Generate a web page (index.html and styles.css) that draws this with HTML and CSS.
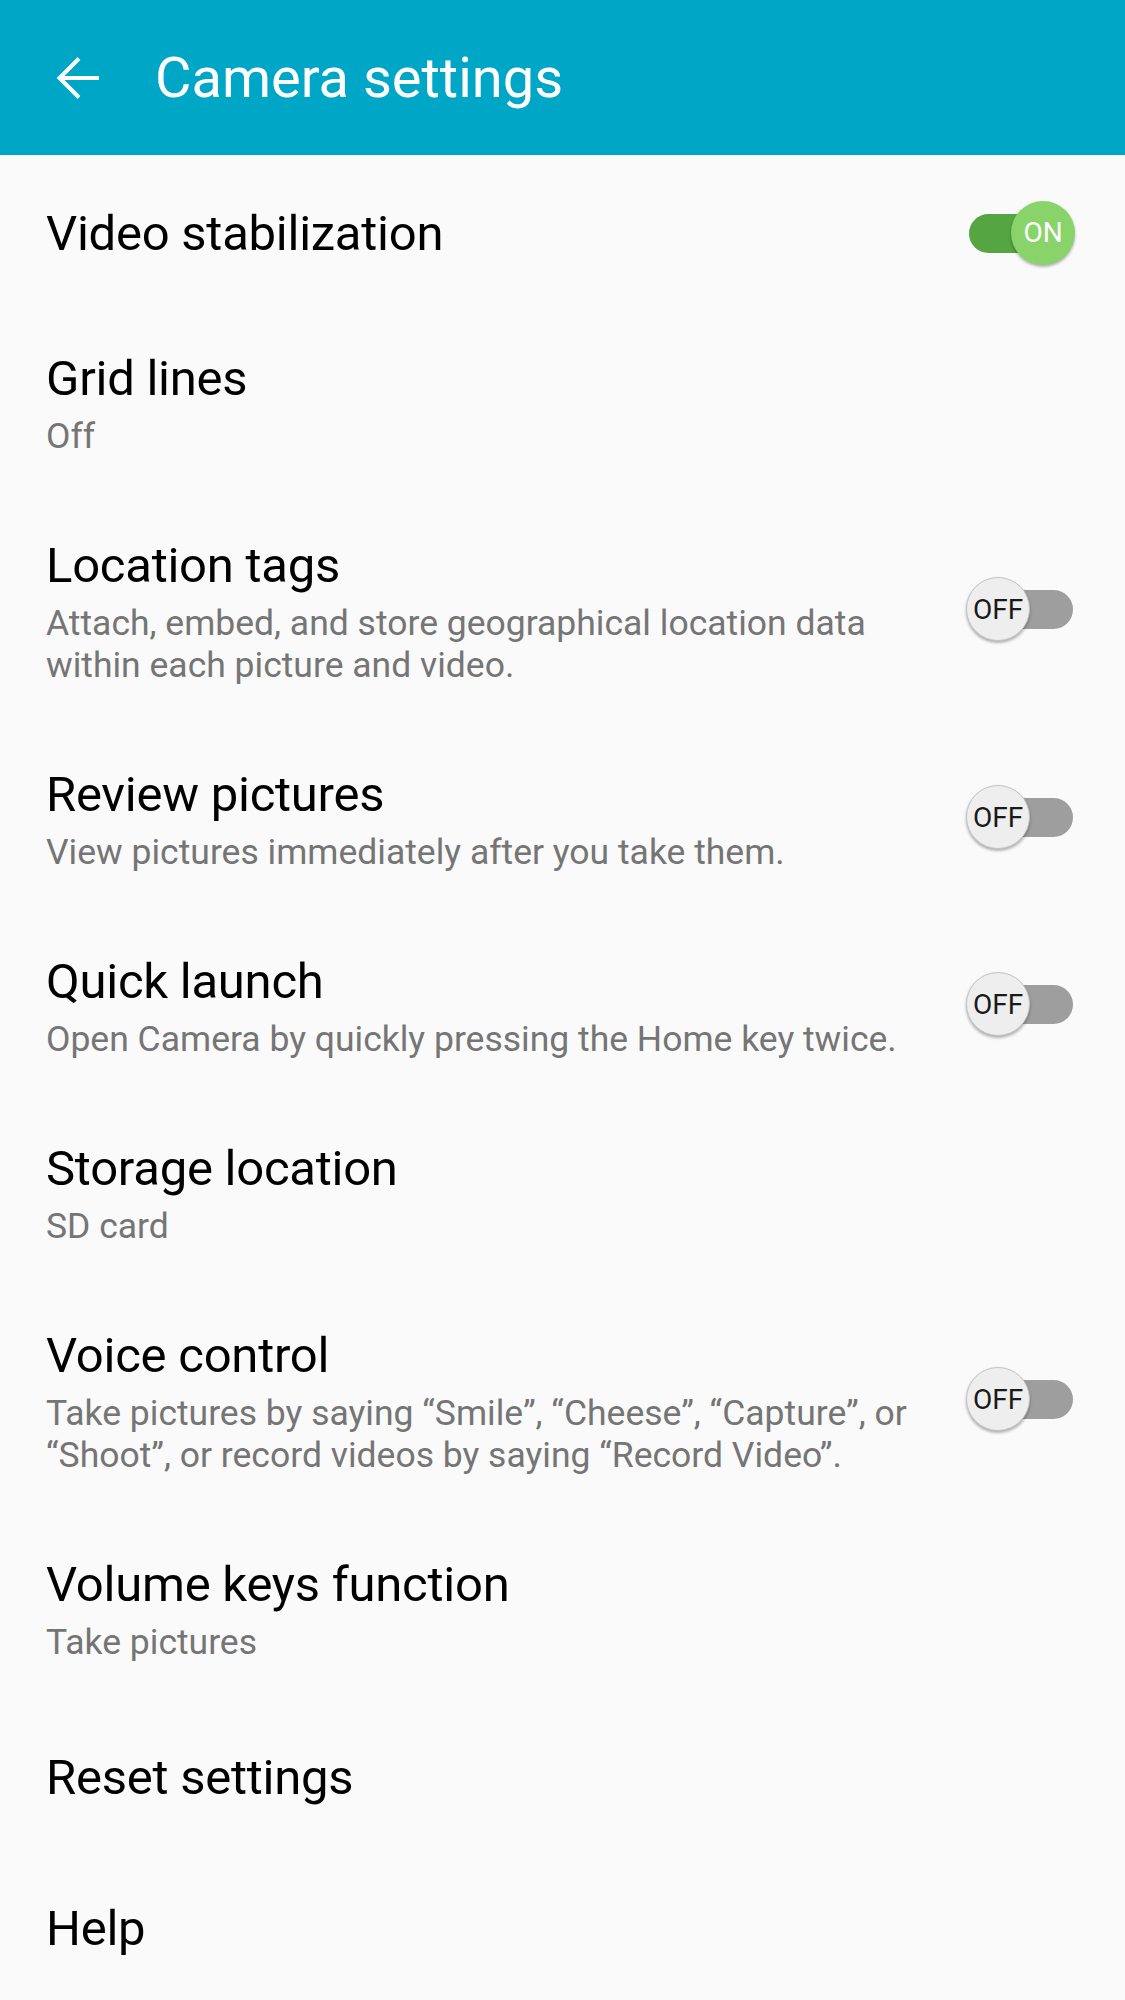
FILE: index.html
```html
<!DOCTYPE html>
<html lang="en">
<head>
    <meta charset="UTF-8">
    <meta name="viewport" content="width=device-width, initial-scale=1.0">
    <title>Camera settings</title>
    <link rel="stylesheet" href="styles.css">
</head>
<body>
    <header class="app-bar">
        <svg class="back-icon" viewBox="0 0 48 48" width="48" height="48">
            <path d="M45 24H8M25 4.5L5.5 24L25 43.5" fill="none" stroke="#fff" stroke-width="4" stroke-linejoin="miter"/>
        </svg>
        <h1>Camera settings</h1>
    </header>

    <ul class="settings-list">
        <li class="setting single">
            <div class="setting-text">
                <div class="setting-title">Video stabilization</div>
            </div>
            <div class="switch on"><span class="track"></span><span class="thumb">ON</span></div>
        </li>
        <li class="setting">
            <div class="setting-text">
                <div class="setting-title">Grid lines</div>
                <div class="setting-sub">Off</div>
            </div>
        </li>
        <li class="setting">
            <div class="setting-text">
                <div class="setting-title">Location tags</div>
                <div class="setting-sub">Attach, embed, and store geographical location data within each picture and video.</div>
            </div>
            <div class="switch"><span class="track"></span><span class="thumb">OFF</span></div>
        </li>
        <li class="setting">
            <div class="setting-text">
                <div class="setting-title">Review pictures</div>
                <div class="setting-sub">View pictures immediately after you take them.</div>
            </div>
            <div class="switch"><span class="track"></span><span class="thumb">OFF</span></div>
        </li>
        <li class="setting">
            <div class="setting-text">
                <div class="setting-title">Quick launch</div>
                <div class="setting-sub">Open Camera by quickly pressing the Home key twice.</div>
            </div>
            <div class="switch"><span class="track"></span><span class="thumb">OFF</span></div>
        </li>
        <li class="setting">
            <div class="setting-text">
                <div class="setting-title">Storage location</div>
                <div class="setting-sub">SD card</div>
            </div>
        </li>
        <li class="setting">
            <div class="setting-text">
                <div class="setting-title">Voice control</div>
                <div class="setting-sub">Take pictures by saying “Smile”, “Cheese”, “Capture”, or “Shoot”, or record videos by saying “Record Video”.</div>
            </div>
            <div class="switch"><span class="track"></span><span class="thumb">OFF</span></div>
        </li>
        <li class="setting">
            <div class="setting-text">
                <div class="setting-title">Volume keys function</div>
                <div class="setting-sub">Take pictures</div>
            </div>
        </li>
        <li class="setting single">
            <div class="setting-text">
                <div class="setting-title">Reset settings</div>
            </div>
        </li>
        <li class="setting single">
            <div class="setting-text">
                <div class="setting-title">Help</div>
            </div>
        </li>
    </ul>
</body>
</html>
```

FILE: styles.css
```css
body {
    margin: 0;
    font-family: Roboto, "Noto Sans", sans-serif;
    background-color: #fafafa;
    color: #000;
}
.app-bar {
    height: 155px;
    background-color: #00a6c6;
    display: flex;
    align-items: center;
    padding-left: 54px;
    box-sizing: border-box;
}
.back-icon {
    display: block;
    margin-right: 53px;
}
.app-bar h1 {
    margin: 0;
    font-size: 56px;
    font-weight: 400;
    color: #fff;
}
.settings-list {
    list-style: none;
    margin: 0;
    padding: 3px 0 0;
}
.setting {
    display: flex;
    align-items: center;
    padding: 38px 50px 39px 46px;
    gap: 50px;
}
.setting.single {
    min-height: 151px;
    padding-top: 0;
    padding-bottom: 0;
    box-sizing: border-box;
}
.setting-text {
    flex: 1;
}
.setting-title {
    font-size: 49px;
    line-height: 64px;
    letter-spacing: -0.25px;
}
.setting-sub {
    margin-top: 4px;
    font-size: 35.5px;
    line-height: 42px;
    color: #757575;
}
.switch {
    position: relative;
    width: 109px;
    height: 66px;
    flex-shrink: 0;
}
.switch .track {
    position: absolute;
    left: 3px;
    right: 2px;
    top: 13px;
    height: 39px;
    border-radius: 20px;
    background-color: #9e9e9e;
}
.switch .thumb {
    position: absolute;
    left: 0;
    top: 0;
    width: 64px;
    height: 64px;
    border-radius: 50%;
    box-sizing: border-box;
    border: 1px solid #c4c4c4;
    background-color: #eeeeee;
    box-shadow: 0 2px 3px rgba(0, 0, 0, 0.3);
    display: flex;
    align-items: center;
    justify-content: center;
    font-size: 28px;
    color: #1a1a1a;
}
.switch.on .track {
    background-color: #55a543;
}
.switch.on .thumb {
    left: auto;
    right: 0;
    border: none;
    background-color: #88d46a;
    color: #fff;
}
```
